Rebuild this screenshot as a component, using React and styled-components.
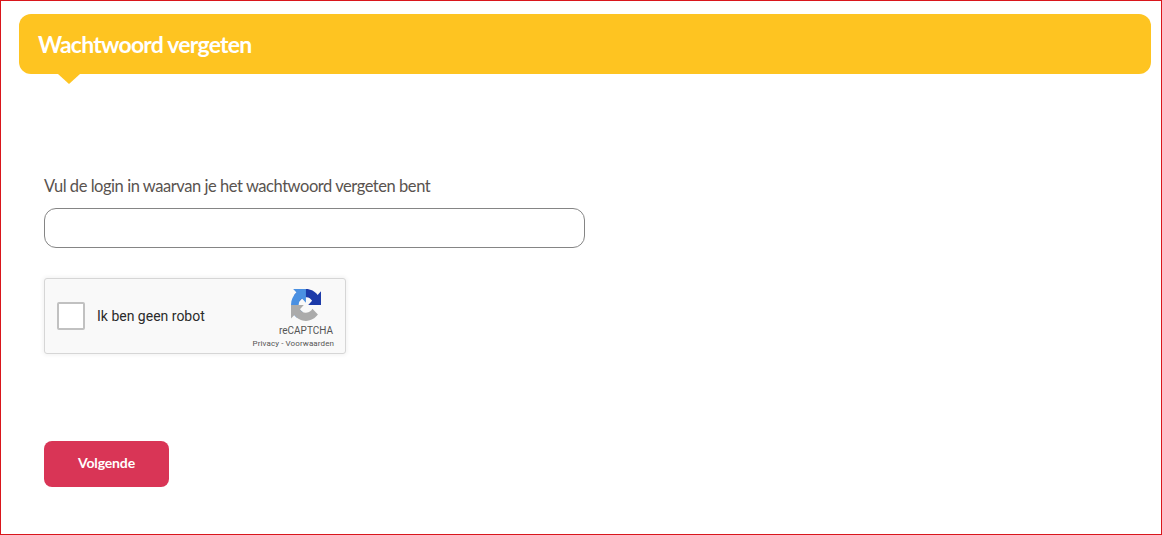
import React from 'react'
import styled, { createGlobalStyle } from 'styled-components'

const GlobalStyle = createGlobalStyle`
  html, body { margin: 0; padding: 0; background: #fff; }
  body { font-family: Lato, "Liberation Sans", sans-serif; }
`

const Frame = styled.div`
  box-sizing: border-box;
  width: 1162px; height: 535px;
  border: 1px solid #d9161c;
  padding: 13px 10px 0 18px;
  display: flex; flex-direction: column;
`
const Banner = styled.div`
  position: relative;
  height: 60px;
  background: #fec421;
  border-radius: 12px;
  display: flex; align-items: center;
  padding-left: 19px;
  &::after {
    content: '';
    position: absolute;
    left: 39px; top: 60px;
    border-left: 11px solid transparent;
    border-right: 11px solid transparent;
    border-top: 10px solid #fec421;
  }
`
const Title = styled.h1`
  margin: 0;
  color: #fff;
  font-size: 23px; font-weight: 700;
  letter-spacing: -0.78px;
`
const Form = styled.form`
  display: flex; flex-direction: column; align-items: flex-start;
  padding: 101px 0 0 25px;
`
const Label = styled.label`
  color: #59534f;
  font-size: 16.5px; line-height: 22px;
  letter-spacing: -0.45px;
  margin-bottom: 11px;
`
const Input = styled.input`
  box-sizing: border-box;
  width: 541px; height: 40px;
  border: 1px solid #858585;
  border-radius: 12px;
  background: #fff;
  margin-bottom: 30px;
`
const Captcha = styled.div`
  box-sizing: border-box;
  width: 302px; height: 76px;
  background: #f9f9f9;
  border: 1px solid #d6d6d6;
  border-radius: 3px;
  box-shadow: 0 0 4px 1px rgba(0, 0, 0, 0.06);
  font-family: Roboto, "Liberation Sans", sans-serif;
  display: flex; align-items: center;
  padding: 0 12px;
  margin-bottom: 87px;
`
const CheckBox = styled.span`
  box-sizing: border-box;
  width: 28px; height: 28px;
  background: #fff;
  border: 2px solid #c1c1c1;
  border-radius: 2px;
  margin-right: 12px;
`
const CaptchaText = styled.span`
  flex: 1;
  color: #2b2b2b;
  font-size: 14px;
`
const Brand = styled.div`
  display: flex; flex-direction: column; align-items: flex-end;
  margin-right: -1px;
  padding-top: 6px;
  color: #555;
  svg { margin-right: 13px; }
`
const BrandName = styled.span`
  font-size: 10px; line-height: 12px;
  margin: 4px 1px 0 0;
`
const BrandLinks = styled.span`
  font-size: 8px; line-height: 10px;
  letter-spacing: 0.1px;
  margin-top: 2px;
`
const Button = styled.button`
  width: 125px; height: 46px;
  border: 0;
  border-radius: 8px;
  background: #d93556;
  color: #fff;
  font-family: Lato, "Liberation Sans", sans-serif;
  font-size: 14px; font-weight: 700;
  letter-spacing: -0.15px;
  padding: 0 0 3px;
`

const RecaptchaLogo = () => (
  <svg width="30" height="32" viewBox="0 0 64 64" preserveAspectRatio="none">
    <path fill="#1c3aa9" d="M64 31.955l-.033-1.37V4.687l-7.16 7.16C50.948 4.674 42.033.093 32.05.093c-10.4 0-19.622 4.96-25.458 12.64l11.736 11.86a15.55 15.55 0 0 1 4.754-5.334c2.05-1.6 4.952-2.906 8.968-2.906.485 0 .86.057 1.135.163 4.976.393 9.288 3.14 11.827 7.124l-8.307 8.307L63.98 31.95" />
    <path fill="#4a90e2" d="M31.862.001l-1.37.033H4.594l7.16 7.16C4.58 13.05.001 21.967.001 31.95c0 10.4 4.96 19.622 12.64 25.458l11.86-11.736a15.55 15.55 0 0 1-5.334-4.754c-1.6-2.05-2.906-4.952-2.906-8.968 0-.485.057-.86.163-1.135.393-4.976 3.14-9.288 7.124-11.827l8.307 8.307L31.856.02" />
    <path fill="#ababab" d="M.001 31.95l.033 1.37v25.898l7.16-7.16c5.86 7.173 14.775 11.754 24.76 11.754 10.4 0 19.622-4.96 25.458-12.64l-11.736-11.86a15.55 15.55 0 0 1-4.754 5.334c-2.05 1.6-4.952 2.906-8.968 2.906-.485 0-.86-.057-1.135-.163-4.976-.393-9.288-3.14-11.827-7.124l8.307-8.307c-10.207.04-21.74.063-29.294-.007" />
  </svg>
)

function App () {
  return (
    <Frame>
      <GlobalStyle />
      <Banner>
        <Title>Wachtwoord vergeten</Title>
      </Banner>
      <Form>
        <Label htmlFor="login">Vul de login in waarvan je het wachtwoord vergeten bent</Label>
        <Input id="login" type="text" />
        <Captcha>
          <CheckBox />
          <CaptchaText>Ik ben geen robot</CaptchaText>
          <Brand>
            <RecaptchaLogo />
            <BrandName>reCAPTCHA</BrandName>
            <BrandLinks>Privacy - Voorwaarden</BrandLinks>
          </Brand>
        </Captcha>
        <Button type="button">Volgende</Button>
      </Form>
    </Frame>
  )
}

export default App
